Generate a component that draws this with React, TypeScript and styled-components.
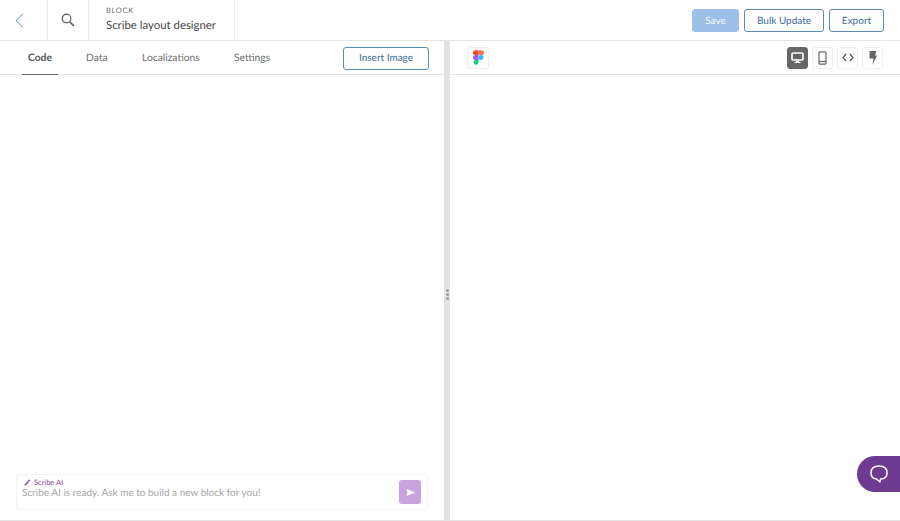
import { createGlobalStyle, styled } from "styled-components";

const GlobalStyle = createGlobalStyle`
  html, body { margin: 0; height: 100%; background: #fff; }
  body {
    font-family: Lato, "Liberation Sans", sans-serif;
    color: #4a4a4a;
    overflow: hidden;
    text-rendering: geometricPrecision;
  }
  #root { height: 100%; }
  * { box-sizing: border-box; }
`;

const Page = styled.div`
  height: 521px;
  display: flex;
  flex-direction: column;
  border-bottom: 1px solid #e4e4e4;
`;

const Header = styled.header`
  height: 41px;
  flex: none;
  display: flex;
  align-items: stretch;
  border-bottom: 1px solid #e4e4e4;
`;

const IconCell = styled.div<{ $width: number; $left: number }>`
  width: ${(p) => p.$width}px;
  flex: none;
  display: flex;
  align-items: center;
  padding-left: ${(p) => p.$left}px;
  border-right: 1px solid #ececec;
`;

const TitleCell = styled.div`
  width: 146px;
  flex: none;
  padding: 5px 0 0 17px;
  border-right: 1px solid #ececec;
`;

const Eyebrow = styled.div`
  font-size: 7.5px;
  line-height: 11px;
  letter-spacing: 0.7px;
  color: #6e6e6e;
`;

const Title = styled.div`
  font-size: 11.4px;
  line-height: 18px;
  margin-top: 1px;
  color: #454545;
`;

const Actions = styled.div`
  margin-left: auto;
  padding: 9px 16px 0 0;
  display: flex;
  gap: 5px;
  align-items: flex-start;
`;

const Button = styled.button<{ $width: number; $primary?: boolean }>`
  width: ${(p) => p.$width}px;
  height: 23px;
  padding: 0;
  border-radius: 3px;
  border: 1px solid ${(p) => (p.$primary ? "#9cc0e8" : "#5c8ab5")};
  background: ${(p) => (p.$primary ? "#9cc0e8" : "#fff")};
  color: ${(p) => (p.$primary ? "#f4f8fc" : "#3a6c9b")};
  font: 10px Lato, "Liberation Sans", sans-serif;
  text-rendering: geometricPrecision;
`;

const Body = styled.div`
  flex: 1;
  min-height: 0;
  display: flex;
`;

const LeftPane = styled.section`
  width: 444px;
  flex: none;
  display: flex;
  flex-direction: column;
`;

const Divider = styled.div`
  width: 6px;
  flex: none;
  background: #e2e2e2;
  display: flex;
  flex-direction: column;
  align-items: center;
  justify-content: center;
  gap: 1px;
  padding-top: 28px;
`;

const Grip = styled.span`
  width: 3px;
  height: 3px;
  border-radius: 50%;
  background: #a0a0a0;
`;

const RightPane = styled.section`
  flex: 1;
  min-width: 0;
`;

const TabBar = styled.nav`
  height: 34px;
  display: flex;
  align-items: stretch;
  padding: 0 15px 0 22px;
  border-bottom: 1px solid #e4e4e4;
`;

const Tab = styled.div<{ $active?: boolean; $span: number }>`
  width: ${(p) => p.$span}px;
  flex: none;
  margin-bottom: -1px;
  display: flex;
  align-items: center;
  font-size: 10.3px;
  font-weight: ${(p) => (p.$active ? 700 : 400)};
  color: ${(p) => (p.$active ? "#555" : "#6f6f6f")};
`;

const TabLabel = styled.span<{ $active?: boolean }>`
  height: 100%;
  display: flex;
  align-items: center;
  padding: 0 6px;
  border-bottom: 1px solid ${(p) => (p.$active ? "#6a6a6a" : "transparent")};
`;

const InsertSlot = styled.div`
  margin-left: auto;
  padding-top: 5px;
`;

const Editor = styled.div`
  flex: 1;
  min-height: 0;
  display: flex;
  align-items: flex-end;
  padding: 0 16px 10px;
`;

const Prompt = styled.div`
  width: 412px;
  height: 36px;
  position: relative;
  padding: 3px 5px;
  border: 1px solid #f3f3f3;
  border-radius: 3px;
`;

const PromptLabel = styled.div`
  display: flex;
  align-items: center;
  gap: 3px;
  padding-left: 2px;
  font-size: 7.5px;
  line-height: 9px;
  color: #7a3f96;
`;

const PromptText = styled.div`
  font-size: 10px;
  line-height: 12px;
  color: #a6a6a6;
`;

const SendButton = styled.div`
  position: absolute;
  right: 6px;
  top: 5px;
  width: 22px;
  height: 24px;
  border-radius: 3px;
  background: #c9a3dd;
  display: flex;
  align-items: center;
  justify-content: center;
`;

const PreviewBar = styled.div`
  height: 34px;
  display: flex;
  align-items: center;
  padding: 0 17px;
  border-bottom: 1px solid #e4e4e4;
`;

const FigmaButton = styled.div`
  width: 22px;
  height: 22px;
  border: 1px solid #eee;
  border-radius: 3px;
  display: flex;
  align-items: center;
  justify-content: center;
`;

const ViewGroup = styled.div`
  margin-left: auto;
  display: flex;
  gap: 4px;
`;

const ViewButton = styled.div<{ $active?: boolean }>`
  width: 21px;
  height: 22px;
  border-radius: 3px;
  border: 1px solid ${(p) => (p.$active ? "#666" : "#efefef")};
  background: ${(p) => (p.$active ? "#666" : "#fff")};
  display: flex;
  align-items: center;
  justify-content: center;
`;

const ChatBubble = styled.div`
  position: absolute;
  right: 0;
  top: 456px;
  width: 43px;
  height: 36px;
  border-radius: 18px 0 0 18px;
  background: #6f3a92;
  display: flex;
  align-items: center;
  justify-content: center;
`;

const FigmaLogo = () => (
  <svg width="11" height="15" viewBox="0 0 12 16">
    <path d="M2.600 0H6v5.400H2.600a2.700 2.700 0 0 1 0-5.400z" fill="#f24e1e" />
    <path d="M6 0h3.400a2.700 2.700 0 0 1 0 5.400H6z" fill="#ff7262" />
    <path d="M2.600 5.300H6v5.400H2.600a2.700 2.700 0 0 1 0-5.400z" fill="#a259ff" />
    <circle cx="8.700" cy="8" r="2.700" fill="#1abcfe" />
    <path d="M2.600 10.600H6v2.700a2.700 2.700 0 1 1-3.400-2.700z" fill="#0acf83" />
  </svg>
);

const BackIcon = () => (
  <svg width="9" height="15" viewBox="0 0 9 15" fill="none">
    <path d="M8 .7 1 7.500l7 6.800" stroke="#5c8ab5" strokeWidth="1" />
  </svg>
);

const SearchIcon = () => (
  <svg width="14" height="14" viewBox="0 0 14 14" fill="none">
    <circle cx="5.500" cy="5.500" r="4.300" stroke="#5f5f5f" strokeWidth="1.200" />
    <path d="M8.800 8.800 13 13" stroke="#5f5f5f" strokeWidth="1.700" />
  </svg>
);

const DesktopIcon = () => (
  <svg width="13" height="12" viewBox="0 0 13 12" fill="none">
    <rect x="1" y="1" width="11" height="7" rx="1" stroke="#fff" strokeWidth="1.600" />
    <path d="M5 8.500h3V10h1.500v1h-6v-1H5z" fill="#fff" />
  </svg>
);

const PhoneIcon = () => (
  <svg width="9" height="14" viewBox="0 0 9 14" fill="none">
    <rect x="1" y=".8" width="7" height="12.400" rx="1.300" stroke="#666" strokeWidth="1.200" />
    <path d="M1 10.500h7" stroke="#666" strokeWidth="1.200" />
  </svg>
);

const CodeIcon = () => (
  <svg width="12" height="9" viewBox="0 0 12 9" fill="none">
    <path d="M4 1 1 4.500 4 8M8 1l3 3.500L8 8" stroke="#555" strokeWidth="1.200" />
  </svg>
);

const BoltIcon = () => (
  <svg width="8" height="14" viewBox="0 0 8 14">
    <path d="M.5 0h7L6 4.500h2L3.500 14l1-6.500H.5z" fill="#666" />
  </svg>
);

const WandIcon = () => (
  <svg width="7" height="7" viewBox="0 0 7 7" fill="none">
    <path d="M.7 6.300 4.500 2.500" stroke="#7a3f96" strokeWidth="1.300" />
    <path d="M5 0l.4 1.100L6.500 1.500l-1.100.4L5 3l-.4-1.100L3.500 1.500l1.100-.4z" fill="#7a3f96" />
  </svg>
);

const tabs = [
  { label: "Code", span: 58, active: true },
  { label: "Data", span: 56 },
  { label: "Localizations", span: 92 },
  { label: "Settings", span: 50 },
];

export default function App() {
  return (
    <Page>
      <GlobalStyle />
      <Header>
        <IconCell $width={48} $left={15}>
          <BackIcon />
        </IconCell>
        <IconCell $width={41} $left={13}>
          <SearchIcon />
        </IconCell>
        <TitleCell>
          <Eyebrow>BLOCK</Eyebrow>
          <Title>Scribe layout designer</Title>
        </TitleCell>
        <Actions>
          <Button $width={47} $primary>Save</Button>
          <Button $width={80}>Bulk Update</Button>
          <Button $width={55}>Export</Button>
        </Actions>
      </Header>
      <Body>
        <LeftPane>
          <TabBar>
            {tabs.map((tab) => (
              <Tab key={tab.label} $active={tab.active} $span={tab.span}>
                <TabLabel $active={tab.active}>{tab.label}</TabLabel>
              </Tab>
            ))}
            <InsertSlot>
              <Button $width={86}>Insert Image</Button>
            </InsertSlot>
          </TabBar>
          <Editor>
            <Prompt>
              <PromptLabel>
                <WandIcon />
                Scribe AI
              </PromptLabel>
              <PromptText>Scribe AI is ready. Ask me to build a new block for you!</PromptText>
              <SendButton>
                <svg width="9" height="7" viewBox="0 0 9 7">
                  <path d="M.5 0 9 3.500.5 7l1-3.500z" fill="#fff" />
                </svg>
              </SendButton>
            </Prompt>
          </Editor>
        </LeftPane>
        <Divider>
          <Grip />
          <Grip />
          <Grip />
        </Divider>
        <RightPane>
          <PreviewBar>
            <FigmaButton>
              <FigmaLogo />
            </FigmaButton>
            <ViewGroup>
              <ViewButton $active><DesktopIcon /></ViewButton>
              <ViewButton><PhoneIcon /></ViewButton>
              <ViewButton><CodeIcon /></ViewButton>
              <ViewButton><BoltIcon /></ViewButton>
            </ViewGroup>
          </PreviewBar>
        </RightPane>
      </Body>
      <ChatBubble>
        <svg width="20" height="20" viewBox="0 0 20 20" fill="none">
          <path d="M10 2c4.600 0 8 1.800 8 7 0 4.600-3 6-6.500 6l-.5 3-3.500-3C4.500 14.700 2 13 2 9c0-5 3.500-7 8-7z" stroke="#fff" strokeWidth="1.500" strokeLinejoin="round" />
        </svg>
      </ChatBubble>
    </Page>
  );
}
